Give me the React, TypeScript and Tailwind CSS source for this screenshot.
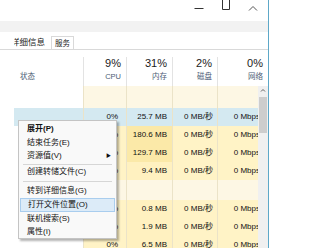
const font = "font-['Liberation_Sans','Noto_Sans_CJK_SC',sans-serif]";

type Row = { cpu: string; mem: string; memDark?: boolean; selected?: boolean } | { group: true; h: string };

const rows: Row[] = [
  { group: true, h: 'h-[22px]' },
  { cpu: '0%', mem: '25.7 MB', selected: true },
  { cpu: '0%', mem: '180.6 MB', memDark: true },
  { cpu: '0%', mem: '129.7 MB', memDark: true },
  { cpu: '0%', mem: '9.4 MB' },
  { group: true, h: 'h-[20px]' },
  { cpu: '0%', mem: '0.8 MB' },
  { cpu: '0%', mem: '1.9 MB' },
  { cpu: '0%', mem: '6.5 MB' },
];

const menu: ({ label: string; bold?: boolean; sub?: boolean; hot?: boolean; h: string } | { sep: string })[] = [
  { label: '展开(P)', bold: true, h: 'h-[14px]' },
  { label: '结束任务(E)', h: 'h-[14px]' },
  { label: '资源值(V)', sub: true, h: 'h-[13px]' },
  { sep: 'h-[4px]' },
  { label: '创建转储文件(C)', h: 'h-[13px]' },
  { sep: 'h-[6px]' },
  { label: '转到详细信息(G)', h: 'h-[14px]' },
  { label: '打开文件位置(O)', hot: true, h: 'h-[14px]' },
  { label: '联机搜索(S)', h: 'h-[14px]' },
  { label: '属性(I)', h: 'h-[12px]' },
];

// title bar buttons, top part cropped off in the shot
function Controls() {
  return (
    <div className="h-[21px] flex justify-end pr-[2px]">
      <div className="w-[27px] h-full flex justify-center">
        <svg width="10" height="21" viewBox="0 0 10 21">
          <line x1="0.5" y1="8.5" x2="9.5" y2="8.5" stroke="#333" strokeWidth="1" />
        </svg>
      </div>
      <div className="w-[27px] h-full flex justify-center">
        <svg width="10" height="21" viewBox="0 0 10 21">
          <path d="M1.5 0 V9.5 H8.5 V0" fill="none" stroke="#333" strokeWidth="1" />
        </svg>
      </div>
      <div className="w-[27px] h-full flex justify-center">
        <svg width="10" height="21" viewBox="0 0 10 21">
          <path d="M1 10.5 L5 6.5 L9 10.5" fill="none" stroke="#555" strokeWidth="1" />
        </svg>
      </div>
    </div>
  );
}

function HeaderCol({ pct, label, w }: { pct: string; label: string; w: string }) {
  return (
    <div className={`${w} border-l border-[#e3e3e3] flex flex-col items-end pr-[5px]`}>
      <div className="h-[13px] leading-[13px] text-[11px] text-[#1a1a1a]">{pct}</div>
      <div className="mt-[2px] h-[10px] leading-[10px] text-[7.5px] text-[#4c5c75]">{label}</div>
    </div>
  );
}

export default function App() {
  return (
    <div className={`w-[331px] h-[248px] bg-white relative overflow-hidden ${font}`}>
      <div className="w-[269px] h-full border-r border-[#5ea8c8] flex flex-col">
        <Controls />
        <div className="h-[11px] bg-[#f2f2f2]" />
        <div className="h-[4px]" />
        {/* tabs */}
        <div className="h-[14px] flex border-b border-[#d9d9d9] pl-[14px]">
          <div className="w-[38px] overflow-hidden border-r border-[#d9d9d9] flex items-center">
            <span className="ml-[-3px] text-[8.5px] leading-[13px] whitespace-nowrap text-[#222]">详细信息</span>
          </div>
          <div className="w-[22px] border-r border-t border-[#d9d9d9] flex items-center justify-center text-[7.5px] leading-[13px] text-[#222]">
            服务
          </div>
        </div>
        {/* header */}
        <div className="h-[36px] flex pt-[7px] pl-[14px]">
          <div className="w-[69px] flex flex-col justify-end pl-[6px] pb-[4px]">
            <span className="text-[7.5px] leading-[10px] text-[#4c5c75]">状态</span>
          </div>
          <HeaderCol pct="9%" label="CPU" w="w-[43px]" />
          <HeaderCol pct="31%" label="内存" w="w-[46px]" />
          <HeaderCol pct="2%" label="磁盘" w="w-[45px]" />
          <HeaderCol pct="0%" label="网络" w="w-[51px]" />
        </div>
        {/* body */}
        <div className="flex-1 flex min-h-0">
          <div className="flex-1 overflow-hidden">
            {rows.map((r, i) =>
              'group' in r ? (
                <div key={i} className={`${r.h} flex pl-[14px]`}>
                  <div className="w-[69px] shrink-0" />
                  <div className="w-[43px] shrink-0 bg-[#fdf7e4] border-l border-[#ebe3c8]" />
                  <div className="w-[46px] shrink-0 bg-[#fdf7e4] border-l border-[#ebe3c8]" />
                  <div className="w-[45px] shrink-0 bg-[#fdf7e4] border-l border-[#ebe3c8]" />
                  <div className="w-[46px] shrink-0 bg-[#fdf7e4] border-l border-[#ebe3c8]" />
                </div>
              ) : (
                <div key={i} className="h-[18px] flex pl-[14px] text-[8px] leading-[18px] text-[#111] whitespace-nowrap">
                  <div className={`flex ${r.selected ? 'bg-[#d4e9f1]' : ''}`}>
                    <div className="w-[69px] shrink-0" />
                    <div className={`w-[43px] shrink-0 text-right pr-[8px] border-l border-[#ebe3c8] ${r.selected ? '' : 'bg-[#fff3c6]'}`}>{r.cpu}</div>
                    <div className={`w-[46px] shrink-0 text-right pr-[5px] border-l border-[#ebe3c8] ${r.selected ? '' : r.memDark ? 'bg-[#fbe9a8]' : 'bg-[#fff1c0]'}`}>{r.mem}</div>
                    <div className={`w-[45px] shrink-0 text-right pr-[4px] border-l border-[#ebe3c8] ${r.selected ? '' : 'bg-[#fff3c6]'}`}>0 MB/秒</div>
                    <div className={`w-[46px] shrink-0 text-right pr-[3px] border-l border-[#ebe3c8] ${r.selected ? '' : 'bg-[#fff3c6]'}`}>0 Mbps</div>
                  </div>
                </div>
              )
            )}
          </div>
          {/* scrollbar */}
          <div className="w-[10px] shrink-0 bg-[#f0f0f0] flex flex-col items-center">
            <svg width="10" height="11" viewBox="0 0 10 11" className="shrink-0">
              <path d="M3 5.5 L5 3.5 L7 5.5" fill="none" stroke="#606060" strokeWidth="1" />
            </svg>
            <div className="w-[8px] h-[36px] bg-[#cdcdcd]" />
          </div>
        </div>
      </div>

      {/* context menu */}
      <div className="absolute left-[18px] top-[120px] w-[99px] h-[119px] bg-[#f9f9f9] border border-[#c4c4c4] shadow-[2px_2px_2px_rgba(0,0,0,0.3)] pt-px flex flex-col text-[8px] text-[#111]">
        {menu.map((m, i) =>
          'sep' in m ? (
            <div key={i} className={`${m.sep} flex items-center px-[4px]`}>
              <div className="h-px w-full bg-[#d6d6d6]" />
            </div>
          ) : (
            <div key={i} className={`${m.h} relative px-[1px] flex items-stretch`}>
              <div
                className={`flex-1 flex items-center pl-[7px] ${m.bold ? 'font-bold' : ''} ${
                  m.hot ? 'bg-[#dcebf8] border border-[#a9cdee] pl-[6px]' : ''
                }`}
              >
                {m.label}
              </div>
              {m.sub && <span className="absolute right-[5px] top-0 h-full flex items-center text-[5px]">▶</span>}
            </div>
          )
        )}
      </div>
    </div>
  );
}
